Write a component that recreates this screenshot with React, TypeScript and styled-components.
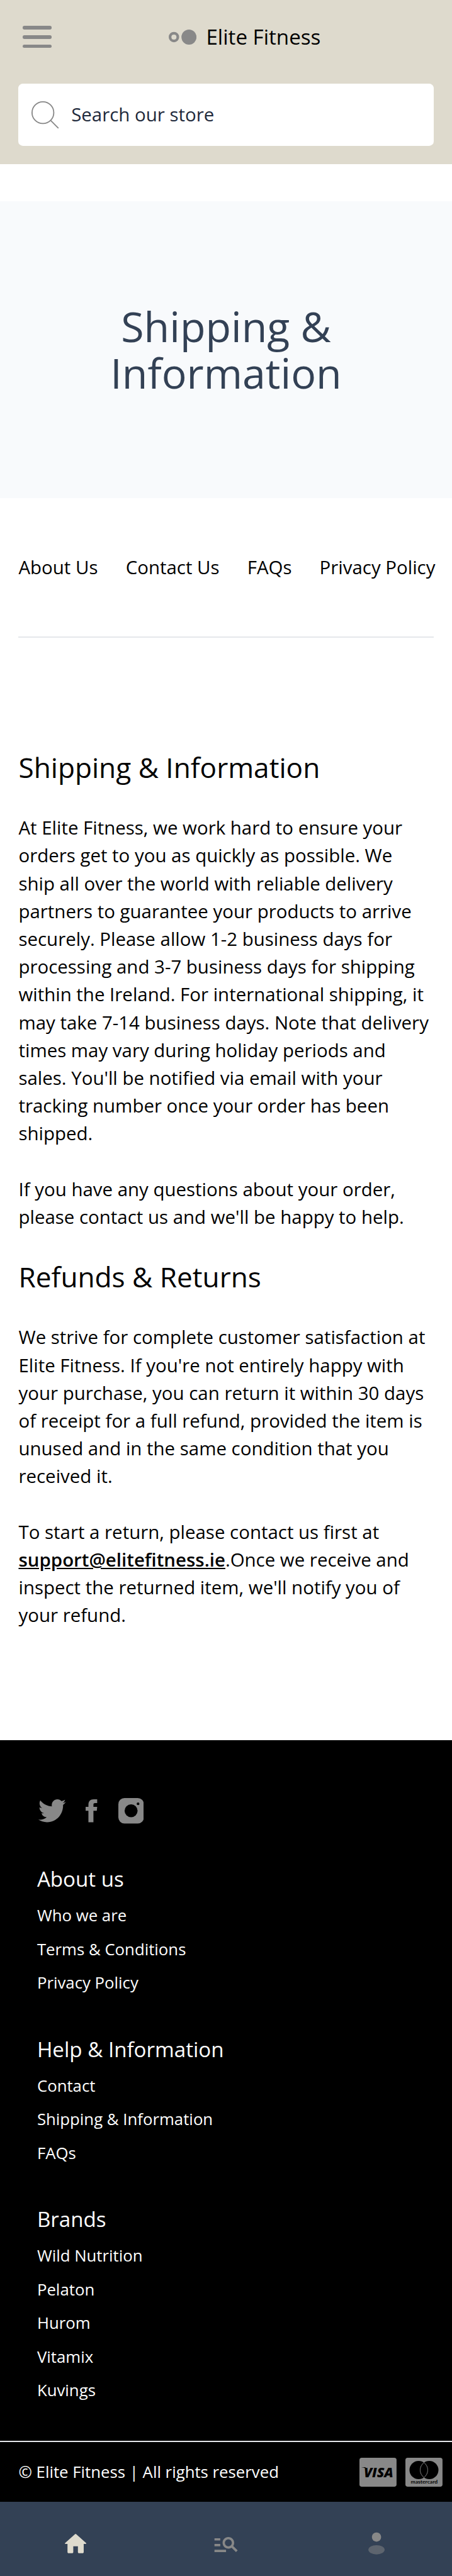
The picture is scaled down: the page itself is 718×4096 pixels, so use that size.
import React from "react";
import styled, { createGlobalStyle } from "styled-components";

// Design units: 16 units = 1rem, the root size scales the whole page.
const u = (n: number) => `${n / 16}rem`;

const GRAY = "#888888";

const GlobalStyle = createGlobalStyle`
  html { font-size: 29.4545px; }
  body {
    margin: 0;
    background: #fff;
    color: #000;
    font-family: "Open Sans", "Noto Sans", sans-serif;
    font-size: 1rem;
    line-height: ${u(24)};
  }
  *, *::before, *::after { box-sizing: border-box; }
  a { color: inherit; text-decoration: none; }
  svg { display: block; flex: none; }
`;

const Header = styled.header`
  background: #dedacd;
  padding: 0 ${u(16)} ${u(16)};
`;

const TopBar = styled.div`
  display: flex;
  align-items: center;
  height: ${u(64)};
  padding-left: ${u(3.5)};
`;

const MenuButton = styled.button`
  display: flex;
  flex-direction: column;
  gap: ${u(5)};
  width: ${u(25)};
  padding: 0;
  border: 0;
  background: none;
`;

const MenuLine = styled.span`
  height: ${u(3)};
  border-radius: ${u(1.5)};
  background: ${GRAY};
`;

const Brand = styled.a`
  display: flex;
  align-items: center;
  gap: ${u(8.4)};
  margin-left: ${u(101)};
  font-size: ${u(18)};
  line-height: ${u(28)};
`;

const BrandMark = styled.svg`
  width: ${u(24)};
  height: ${u(13)};
`;

const SearchBox = styled.label`
  display: flex;
  align-items: center;
  gap: ${u(7.4)};
  height: ${u(54)};
  margin-top: ${u(8)};
  padding-left: ${u(8.1)};
  border-radius: ${u(4)};
  background: #fff;
  color: #1e293b;
`;

const SearchIcon = styled.svg`
  width: ${u(30)};
  height: ${u(30)};
`;

const Hero = styled.section`
  display: flex;
  align-items: center;
  justify-content: center;
  height: ${u(256)};
  margin-top: ${u(32)};
  background: #f8fafc;
`;

const HeroTitle = styled.h1`
  width: ${u(240)};
  margin: 0;
  color: #334155;
  font-size: ${u(36)};
  font-weight: 400;
  line-height: ${u(40)};
  text-align: center;
`;

const Main = styled.main`
  padding: 0 ${u(16)} ${u(96)};
`;

const PageLinks = styled.nav`
  display: flex;
  gap: ${u(24)};
  padding: ${u(48)} 0;
  margin-bottom: ${u(96)};
  border-bottom: 2px solid #e5e7eb;
  white-space: nowrap;
`;

const Article = styled.article`
  display: flex;
  flex-direction: column;
  gap: ${u(24)};
  padding-right: ${u(2)};
`;

const ArticleTitle = styled.h2`
  margin: 0;
  font-size: ${u(24)};
  font-weight: 400;
  line-height: ${u(32)};
`;

const Paragraph = styled.p`
  margin: 0;
`;

const MailLink = styled.a`
  font-weight: 600;
  text-decoration: underline;
`;

const Footer = styled.footer`
  background: #000;
  color: #fff;
`;

const FooterBody = styled.div`
  padding: ${u(49)} ${u(32)} 0;
`;

const Social = styled.div`
  display: flex;
  align-items: center;
  height: ${u(24)};
  margin-bottom: ${u(33)};
  color: ${GRAY};
`;

const SocialIcon = styled.svg<{ $w: number; $h: number; $before: number }>`
  width: ${(p) => u(p.$w)};
  height: ${(p) => u(p.$h)};
  margin-left: ${(p) => u(p.$before)};
`;

const FooterGroup = styled.section`
  padding-bottom: ${u(29)};
`;

const FooterTitle = styled.h3`
  margin: 0 0 ${u(3)};
  font-size: ${u(18)};
  font-weight: 400;
  line-height: ${u(28)};
`;

const FooterList = styled.ul`
  margin: 0;
  padding: 0;
  list-style: none;
  font-size: ${u(14)};
  line-height: ${u(29)};
`;

const Legal = styled.div`
  display: flex;
  align-items: center;
  gap: ${u(8)};
  height: ${u(53)};
  padding: 0 ${u(8)} 0 ${u(16)};
  border-top: 2px solid #e5e7eb;
  font-size: ${u(14)};
`;

const Copyright = styled.span`
  flex: 1;
`;

const PayCard = styled.svg`
  width: ${u(32)};
  height: ${u(25)};
`;

const TabBar = styled.nav`
  display: grid;
  grid-template-columns: repeat(3, 1fr);
  place-items: center;
  height: ${u(64)};
  padding-top: ${u(8)};
  background: #334155;
`;

const TabIcon = styled.svg<{ $active?: boolean }>`
  width: ${u(24)};
  height: ${u(24)};
  color: ${(p) => (p.$active ? "#dedacd" : GRAY)};
`;

const pageLinks = ["About Us", "Contact Us", "FAQs", "Privacy Policy"];

const footerGroups = [
  { title: "About us", items: ["Who we are", "Terms & Conditions", "Privacy Policy"] },
  { title: "Help & Information", items: ["Contact", "Shipping & Information", "FAQs"] },
  { title: "Brands", items: ["Wild Nutrition", "Pelaton", "Hurom", "Vitamix", "Kuvings"] },
];

const Visa = () => (
  <PayCard viewBox="0 0 64 50">
    <rect width="64" height="50" rx="4" fill={GRAY} />
    <path d="M4 16.200h6.200l2 3.200C10 17.600 7 16.900 4 16.700z" fill="#000" />
    <text
      x="7.500"
      y="33.500"
      fontFamily="Open Sans"
      fontSize="23.500"
      fontWeight="800"
      fontStyle="italic"
      textLength="51"
      lengthAdjust="spacingAndGlyphs"
    >
      VISA
    </text>
  </PayCard>
);

const Mastercard = () => (
  <PayCard viewBox="0 0 64 50">
    <rect width="64" height="50" rx="4" fill={GRAY} />
    <circle cx="22.8" cy="21.2" r="15.8" />
    <circle cx="41.2" cy="21.2" r="15.8" />
    <path
      d="M32 8.400A15.800 15.800 0 0 1 32 34A15.800 15.800 0 0 1 32 8.400z"
      fill="#000"
      stroke={GRAY}
      strokeWidth="1"
    />
    <text
      x="9.200"
      y="44.300"
      fontFamily="Lato"
      fontSize="9"
      fontWeight="700"
      textLength="46.500"
      lengthAdjust="spacingAndGlyphs"
    >
      mastercard
    </text>
  </PayCard>
);

export default function App() {
  return (
    <>
      <GlobalStyle />
      <Header>
        <TopBar>
          <MenuButton aria-label="Menu">
            <MenuLine />
            <MenuLine />
            <MenuLine />
          </MenuButton>
          <Brand href="#">
            <BrandMark viewBox="0 0 48 26">
              <circle cx="9" cy="13" r="6.7" fill="none" stroke={GRAY} strokeWidth="4.600" />
              <circle cx="35" cy="13" r="13" fill={GRAY} />
            </BrandMark>
            Elite Fitness
          </Brand>
        </TopBar>
        <SearchBox>
          <SearchIcon viewBox="0 0 24 24" fill="none" stroke={GRAY} strokeWidth="0.800">
            <circle cx="10.5" cy="10.5" r="7.5" />
            <path d="M15.800 15.800 21.200 21.200" />
          </SearchIcon>
          Search our store
        </SearchBox>
      </Header>

      <Hero>
        <HeroTitle>Shipping &amp; Information</HeroTitle>
      </Hero>

      <Main>
        <PageLinks>
          {pageLinks.map((label) => (
            <a href="#" key={label}>{label}</a>
          ))}
        </PageLinks>
        <Article>
          <ArticleTitle>Shipping &amp; Information</ArticleTitle>
          <Paragraph>
            At Elite Fitness, we work hard to ensure your orders get to you as quickly as possible.
            We ship all over the world with reliable delivery partners to guarantee your products to
            arrive securely. Please allow 1-2 business days for processing and 3-7 business days for
            shipping within the Ireland. For international shipping, it may take 7-14 business days.
            Note that delivery times may vary during holiday periods and sales. You'll be notified
            via email with your tracking number once your order has been shipped.
          </Paragraph>
          <Paragraph>
            If you have any questions about your order, please contact us and we'll be happy to
            help.
          </Paragraph>
          <ArticleTitle>Refunds &amp; Returns</ArticleTitle>
          <Paragraph>
            We strive for complete customer satisfaction at Elite Fitness. If you're not entirely
            happy with your purchase, you can return it within 30 days of receipt for a full refund,
            provided the item is unused and in the same condition that you received it.
          </Paragraph>
          <Paragraph>
            To start a return, please contact us first at{" "}
            <MailLink href="#">support@elitefitness.ie</MailLink>.Once we receive and inspect the
            returned item, we'll notify you of your refund.
          </Paragraph>
        </Article>
      </Main>

      <Footer>
        <FooterBody>
          <Social>
            <SocialIcon
              $w={23.7}
              $h={19.8}
              $before={1.2}
              viewBox="1.56 4 20.900 17"
              preserveAspectRatio="none"
              fill="currentColor"
            >
              <path d="M22.460 6c-.77.35-1.600.58-2.460.69.88-.53 1.560-1.370 1.880-2.380-.83.5-1.750.85-2.720 1.050C18.370 4.500 17.260 4 16 4c-2.350 0-4.270 1.920-4.270 4.290 0 .34.04.67.11.98C8.280 9.090 5.110 7.380 3 4.790c-.37.63-.58 1.370-.58 2.150 0 1.490.75 2.810 1.910 3.560-.71 0-1.370-.2-1.950-.5v.03c0 2.080 1.480 3.820 3.440 4.210a4.220 4.220 0 0 1-1.930.07 4.280 4.280 0 0 0 4 2.980 8.521 8.521 0 0 1-5.330 1.840c-.34 0-.68-.02-1.020-.06C3.440 20.290 5.700 21 8.120 21 16 21 20.330 14.460 20.330 8.790c0-.19 0-.37-.01-.56.84-.6 1.560-1.360 2.140-2.230z" />
            </SocialIcon>
            <SocialIcon $w={10} $h={19.8} $before={17.1} viewBox="0 0 60 119" fill="currentColor">
              <path d="M14.500 119V60H0V39H14.500V29C14.500 9 24 0 42 0H60V20H49C42 20 40.500 23 40.500 29V39H60L58 60H40.500V119Z" />
            </SocialIcon>
            <SocialIcon $w={22} $h={22} $before={18} viewBox="0 0 44 44">
              <rect width="44" height="44" rx="10.500" fill="currentColor" />
              <circle cx="22" cy="22" r="11.200" fill="#000" />
              <circle cx="34" cy="10" r="2.300" fill="#000" />
            </SocialIcon>
          </Social>
          {footerGroups.map((group) => (
            <FooterGroup key={group.title}>
              <FooterTitle>{group.title}</FooterTitle>
              <FooterList>
                {group.items.map((item) => (
                  <li key={item}>
                    <a href="#">{item}</a>
                  </li>
                ))}
              </FooterList>
            </FooterGroup>
          ))}
        </FooterBody>
        <Legal>
          <Copyright>© Elite Fitness | All rights reserved</Copyright>
          <Visa />
          <Mastercard />
        </Legal>
      </Footer>

      <TabBar>
        <TabIcon $active viewBox="0 0 24 24" fill="currentColor">
          <path d="M10 19v-5h4v5c0 .55.45 1 1 1h3c.55 0 1-.45 1-1v-7h1.700c.46 0 .68-.57.33-.87L12.670 3.600c-.38-.34-.96-.34-1.340 0l-8.360 7.530c-.34.3-.13.87.33.87H5v7c0 .55.45 1 1 1h3c.55 0 1-.45 1-1z" />
        </TabIcon>
        <TabIcon viewBox="0 0 24 24" fill="currentColor">
          <path d="M7 9H2V7h5v2zm0 3H2v2h5v-2zm13.590 7-3.830-3.830c-.8.52-1.740.83-2.760.83-2.760 0-5-2.240-5-5s2.240-5 5-5 5 2.240 5 5c0 1.020-.31 1.960-.83 2.750L22 17.590 20.590 19zM17 11c0-1.650-1.350-3-3-3s-3 1.350-3 3 1.350 3 3 3 3-1.350 3-3zM2 19h10v-2H2v2z" />
        </TabIcon>
        <TabIcon viewBox="0 0 24 24" fill="currentColor">
          <circle cx="12" cy="6" r="4" />
          <ellipse cx="12" cy="17" rx="7" ry="4" opacity="0.5" />
        </TabIcon>
      </TabBar>
    </>
  );
}
